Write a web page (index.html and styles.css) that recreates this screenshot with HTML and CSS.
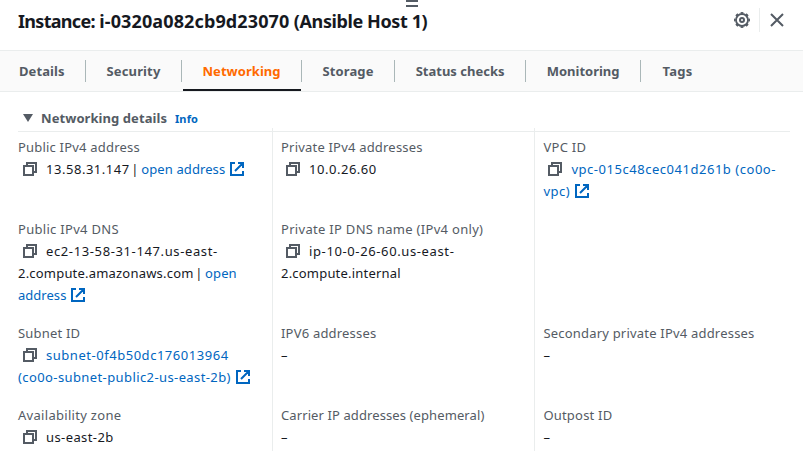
FILE: index.html
```html
<!DOCTYPE html>
<html lang="en">
<head>
<meta charset="utf-8">
<title>Instance networking</title>
<link rel="stylesheet" href="styles.css">
</head>
<body>
<svg class="defs" width="0" height="0">
  <symbol id="copy" viewBox="0 0 14 14"><path d="M1 4h9v9H1zM4 4V1h9v9h-3" fill="none" stroke="currentColor" stroke-width="2"/></symbol>
  <symbol id="ext" viewBox="0 0 14 14"><path d="M5 1H1v12h12V9M8 1h5v5M12.500 1.500L5 9" fill="none" stroke="currentColor" stroke-width="2"/></symbol>
</svg>
<div class="grip"></div>
<header class="header">
  <h1><span class="kind">Instance:</span> <span class="id">i-0320a082cb9d23070</span> <span class="name">(Ansible Host 1)</span></h1>
  <div class="actions">
    <svg class="gear" viewBox="0 0 16 16" fill="none" stroke="currentColor"><circle cx="8" cy="8" r="6" stroke-width="1.800"/><circle cx="8" cy="8" r="7.200" stroke-width="1.600" pathLength="80" stroke-dasharray="5 5" stroke-dashoffset="2.500"/><circle cx="8" cy="8" r="2" stroke-width="2"/></svg>
    <span class="rule"></span>
    <svg class="close" viewBox="0 0 14 14"><path d="M1 1l12 12M13 1L1 13" stroke="currentColor" stroke-width="2"/></svg>
  </div>
</header>
<nav class="tabs">
  <a class="tab details">Details</a>
  <a class="tab security">Security</a>
  <a class="tab networking active">Networking</a>
  <a class="tab storage">Storage</a>
  <a class="tab status">Status checks</a>
  <a class="tab monitoring">Monitoring</a>
  <a class="tab tags">Tags</a>
</nav>
<section>
  <div class="section-head"><span class="caret"></span><h2>Networking details</h2><a class="info">Info</a></div>
  <div class="grid">
    <div class="cell"><div class="label s2">Public IPv4 address</div>
      <div><svg class="copy"><use href="#copy"/></svg><span class="s5">13.58.31.147</span><span class="bar"> | </span><a class="s1">open address</a><svg class="ext"><use href="#ext"/></svg></div></div>
    <div class="cell"><div class="label s2">Private IPv4 addresses</div>
      <div><svg class="copy"><use href="#copy"/></svg><span class="s5">10.0.26.60</span></div></div>
    <div class="cell"><div class="label s3">VPC ID</div>
      <div><svg class="copy"><use href="#copy"/></svg><a class="s5">vpc-015c48cec041d261b (co0o-<br>vpc)</a><svg class="ext"><use href="#ext"/></svg></div></div>

    <div class="cell"><div class="label s3">Public IPv4 DNS</div>
      <div><svg class="copy"><use href="#copy"/></svg><span class="s6">ec2-13-58-31-147.us-east-</span><br><span class="s2">2.compute.amazonaws.com</span><span class="bar"> | </span><a class="s1">open<br><span class="s0">address</span></a><svg class="ext"><use href="#ext"/></svg></div></div>
    <div class="cell"><div class="label s3">Private IP DNS name (IPv4 only)</div>
      <div><svg class="copy"><use href="#copy"/></svg><span class="s6">ip-10-0-26-60.us-east-</span><br><span class="s2">2.compute.internal</span></div></div>
    <div class="cell"></div>

    <div class="cell"><div class="label s2">Subnet ID</div>
      <div><svg class="copy"><use href="#copy"/></svg><a class="s5">subnet-0f4b50dc176013964</a><br><a class="s4">(co0o-subnet-public2-us-east-2b)</a><svg class="ext"><use href="#ext"/></svg></div></div>
    <div class="cell"><div class="label s2">IPV6 addresses</div><div>–</div></div>
    <div class="cell"><div class="label s2">Secondary private IPv4 addresses</div><div>–</div></div>

    <div class="cell"><div class="label s3">Availability zone</div>
      <div><svg class="copy"><use href="#copy"/></svg><span class="s4">us-east-2b</span></div></div>
    <div class="cell"><div class="label s1">Carrier IP addresses (ephemeral)</div><div>–</div></div>
    <div class="cell"><div class="label s2">Outpost ID</div><div>–</div></div>
  </div>
</section>
</body>
</html>
```
FILE: styles.css
```css
* { box-sizing: border-box; }
html, body { height: 451px; overflow: hidden; }
body {
  margin: 0;
  background: #fff;
  color: #16191f;
  font: 13px/22px "Noto Sans", "Open Sans", sans-serif;
}
.defs { position: absolute; }
.grip {
  position: absolute;
  left: 406px;
  top: 0;
  width: 12px;
  height: 7px;
  border: solid #545b64;
  border-width: 2px 0;
}
.header {
  display: flex;
  justify-content: space-between;
  align-items: flex-start;
  height: 50px;
  padding: 8px 19px 0 18px;
}
h1 { margin: 0; font-size: 18px; line-height: 26px; letter-spacing: -.22px; white-space: nowrap; }
.kind { letter-spacing: -.7px; }
.id { letter-spacing: .12px; }
.name { letter-spacing: -.4px; }
.actions { display: flex; align-items: center; height: 24px; color: #545b64; }
.gear { width: 16px; height: 16px; }
.rule { width: 1px; height: 24px; margin: 0 10px 0 9px; background: #eaeded; }
.close { width: 14px; height: 14px; }
.tabs {
  display: flex;
  height: 42px;
  background: #fafafa;
  border: solid #eaeded;
  border-width: 1px 0;
  color: #545b64;
  font-weight: 700;
}
.tab { position: relative; height: 40px; padding-top: 10px; line-height: 20px; white-space: nowrap; }
.tab:not(:last-child)::after {
  content: "";
  position: absolute;
  right: 0;
  top: 9px;
  width: 1px;
  height: 22px;
  background: #aab7b8;
}
.details { width: 86px; padding-left: 19px; letter-spacing: .07px; }
.security { width: 96px; padding-left: 20.5px; letter-spacing: .14px; }
.networking { width: 120px; padding-left: 20.5px; letter-spacing: .04px; }
.storage { width: 93px; padding-left: 20.5px; letter-spacing: .11px; }
.status { width: 131px; padding-left: 20.7px; }
.monitoring { width: 115px; padding-left: 20.7px; }
.tags { padding-left: 21.5px; letter-spacing: .25px; }
.active::before {
  content: "";
  position: absolute;
  left: 1px;
  right: 1px;
  bottom: 0;
  height: 2px;
  background: #16191f;
}
.section-head {
  display: flex;
  align-items: center;
  height: 40px;
  margin: 0 13px 0 18px;
  padding-top: 13px;
  border-bottom: 1px solid #eaeded;
  color: #545b64;
}
.caret { margin: 0 8px 0 5px; border: solid transparent; border-width: 8px 5px 0; border-top-color: #545b64; }
h2 { margin: 0; font-size: 13px; letter-spacing: .07px; }
a { color: #0066c0; }
.info { margin: 1px 0 0 8px; font-size: 11px; font-weight: 700; letter-spacing: .11px; }
.grid {
  display: grid;
  grid-template-columns: 262px 262px 1fr;
  margin: -4px 0 0 10px;
}
.cell { padding: 0 8px 16px; white-space: nowrap; }
.cell:nth-child(-n+3) { padding-top: 8px; }
.cell:not(:nth-child(3n+1)) { border-left: 1px solid #eaeded; }
.cell:nth-child(3n) { padding-left: 8.4px; }
.label { color: #545b64; }
.copy { width: 14px; height: 14px; margin: 0 9px 0 5px; color: #545b64; vertical-align: -2px; }
.ext { width: 14px; height: 14px; margin-left: 5px; color: #0066c0; vertical-align: -2px; }
.bar { margin: 0 1px 0 -1px; letter-spacing: -.8px; }
.tabs a { color: inherit; }
.tabs .active { color: #ff6a00; }
.s0 { letter-spacing: .03px; }
.s1 { letter-spacing: .1px; }
.s2 { letter-spacing: .2px; }
.s3 { letter-spacing: .3px; }
.s4 { letter-spacing: .4px; }
.s5 { letter-spacing: .53px; }
.s6 { letter-spacing: .62px; }
```
